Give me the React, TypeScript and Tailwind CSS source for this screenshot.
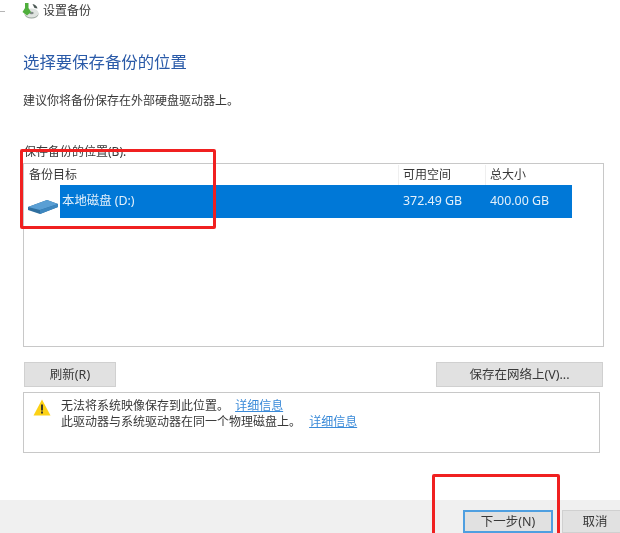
const FONT = "font-['Noto_Sans','Noto_Sans_CJK_SC',sans-serif]";

function ShieldIcon() {
  return (
    <svg width="18" height="18" viewBox="0 0 18 18" aria-hidden="true">
      <ellipse cx="10.5" cy="12" rx="7" ry="4.5" fill="#98a39a" />
      <ellipse cx="10.5" cy="11" rx="7" ry="4.5" fill="#dfe3e0" />
      <ellipse cx="10.5" cy="11" rx="2.2" ry="1.3" fill="#7f8b86" />
      <path d="M1.500 10l2.500-4V1h3.500v5L10 10l-4 3.500z" fill="#4fae3c" />
      <path d="M11.500 2c2.500.5 4.500 2 5 4.500l-3-.5z" fill="#4d5a56" />
    </svg>
  );
}

function DriveIcon() {
  return (
    <svg width="32" height="18" viewBox="0 0 32 18" aria-hidden="true">
      <path d="M1 10 L20 3 L31 7 L31 10 L13 17 L1 13z" fill="#2f6f9f" />
      <path d="M1 10 L20 3 L31 7 L13 13z" fill="#5a9fd4" />
      <path d="M13 13 L31 7 L31 10 L13 17z" fill="#3d86bf" />
    </svg>
  );
}

function WarningIcon() {
  return (
    <svg width="18" height="17" viewBox="0 0 18 17" aria-hidden="true">
      <path d="M9 0.500 L17.500 16.500 H0.500z" fill="#fcd116" />
      <rect x="8" y="5.500" width="2" height="6" fill="#3a3a2a" />
      <rect x="8" y="12.500" width="2" height="2" fill="#3a3a2a" />
    </svg>
  );
}

export default function App() {
  return (
    <div className={`relative flex h-[533px] w-[620px] flex-col overflow-hidden bg-white text-[12px] leading-[16px] text-[#383838] blur-[0.6px] ${FONT}`}>
      <div className="flex h-[22px] items-center">
        <div className="h-px w-[5px] bg-[#b5b5b5]" />
        <div className="ml-[16px]"><ShieldIcon /></div>
        <span className="ml-[4px]">设置备份</span>
      </div>

      <div className="flex flex-1 flex-col pl-[23px]">
        <h1 className="mt-[30px] text-[16.4px] leading-[20px] font-normal text-[#2a5aa8]">选择要保存备份的位置</h1>
        <p className="mt-[21px]">建议你将备份保存在外部硬盘驱动器上。</p>
        <p className="mt-[35px] pl-px">保存备份的位置(B):</p>

        <div className="mt-[3px] h-[184px] w-[581px] border border-[#c8c8c8]">
          <div className="flex h-[21px] items-center pt-[1px]">
            <span className="w-[374px] pl-[5px]">备份目标</span>
            <span className="w-[87px] border-l border-[#efefef] pl-[4px] leading-[20px]">可用空间</span>
            <span className="w-[87px] border-l border-[#efefef] pl-[4px] leading-[20px]">总大小</span>
          </div>
          <div className="flex h-[33px]">
            <div className="flex w-[36px] items-end justify-center pb-[3px] pl-[2px]">
              <DriveIcon />
            </div>
            <div className="flex w-[512px] bg-[#0078d7] text-[12.4px] text-[#e2f0fb]">
              <span className="w-[338px] pl-[2px] pt-[8px]">本地磁盘 (D:)</span>
              <span className="w-[87px] pl-[5px] pt-[8px]">372.49 GB</span>
              <span className="pl-[5px] pt-[8px]">400.00 GB</span>
            </div>
          </div>
        </div>

        <div className="mt-[15px] flex w-[580px] justify-between pl-px text-[12.5px]">
          <button className="flex h-[25px] w-[92px] items-center justify-center border border-[#d0d0d0] bg-[#e1e1e1]">刷新(R)</button>
          <button className="flex h-[25px] w-[167px] items-center justify-center border border-[#d0d0d0] bg-[#e1e1e1]">保存在网络上(V)...</button>
        </div>

        <div className="mt-[5px] flex h-[61px] w-[577px] border border-[#c8c8c8] pl-[9px] pt-[5px]">
          <div className="pt-[1px]"><WarningIcon /></div>
          <div className="ml-[10px]">
            <p>无法将系统映像保存到此位置。 <a className="ml-[3px] text-[#3a8ad8] underline">详细信息</a></p>
            <p>此驱动器与系统驱动器在同一个物理磁盘上。 <a className="ml-[5px] text-[#3a8ad8] underline">详细信息</a></p>
          </div>
        </div>
      </div>

      <div className="flex h-[33px] justify-end bg-[#f0f0f0] pt-[10px] text-[12.5px]">
        <button className="h-[23px] w-[90px] border-2 border-[#4f9fe0] bg-[#e1e1e1]">下一步(N)</button>
        <button className="ml-[9px] -mr-[8px] h-[23px] w-[66px] border border-[#d0d0d0] bg-[#e1e1e1]">取消</button>
      </div>

      <div className="absolute left-[20px] top-[149px] h-[80px] w-[196px] rounded-[2px] border-[3px] border-[#f02020]" />
      <div className="absolute left-[432px] top-[474px] h-[70px] w-[128px] rounded-[2px] border-[3px] border-[#f02020]" />
    </div>
  );
}
